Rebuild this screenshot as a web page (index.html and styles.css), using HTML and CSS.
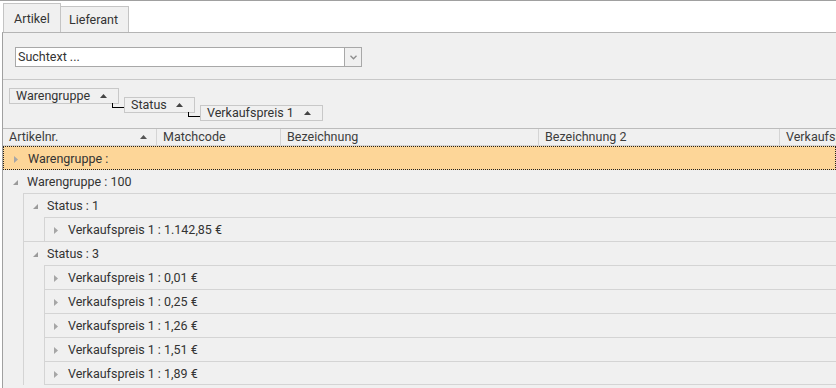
FILE: index.html
```html
<!DOCTYPE html>
<html lang="de">
<head>
    <meta charset="UTF-8">
    <title>Artikel</title>
    <link rel="stylesheet" href="styles.css">
</head>
<body>
<div class="window">
    <!-- Tabs -->
    <div class="tab-strip">
        <div class="tab tab-active">Artikel</div>
        <div class="tab">Lieferant</div>
    </div>

    <div class="panel">
        <!-- Search -->
        <div class="search-bar">
            <div class="combo">
                <span class="combo-text">Suchtext ...</span>
                <span class="combo-btn">
                    <svg width="7" height="5" viewBox="0 0 7 5"><path d="M0.5 0.8L3.5 3.8L6.5 0.8" fill="none" stroke="#8c8c8c" stroke-width="1.3"/></svg>
                </span>
            </div>
        </div>

        <!-- Group by panel -->
        <div class="group-panel">
            <div class="group-box box-warengruppe">Warengruppe <svg class="sort-up" width="7" height="4" viewBox="0 0 7 4"><path d="M0 4L3.5 0L7 4Z"/></svg></div>
            <div class="group-box box-status">Status <svg class="sort-up" width="7" height="4" viewBox="0 0 7 4"><path d="M0 4L3.5 0L7 4Z"/></svg></div>
            <div class="group-box box-preis">Verkaufspreis 1 <svg class="sort-up" width="7" height="4" viewBox="0 0 7 4"><path d="M0 4L3.5 0L7 4Z"/></svg></div>
        </div>

        <!-- Grid -->
        <div class="grid">
            <div class="grid-header">
                <div class="col col-1">Artikelnr. <svg class="sort-up" width="7" height="4" viewBox="0 0 7 4"><path d="M0 4L3.5 0L7 4Z"/></svg></div>
                <div class="col col-2">Matchcode</div>
                <div class="col col-3">Bezeichnung</div>
                <div class="col col-4">Bezeichnung 2</div>
                <div class="col col-5">Verkaufspreis 1</div>
            </div>

            <div class="grid-body">
                <div class="row row-top row-focused">
                    <span class="toggle"><svg width="4" height="7" viewBox="0 0 4 7"><path d="M0 0L4 3.5L0 7Z"/></svg></span>Warengruppe :
                </div>
                <div class="row row-top">
                    <span class="toggle open"><svg width="5" height="5" viewBox="0 0 5 5"><path d="M5 0V5H0Z"/></svg></span>Warengruppe : 100
                </div>
                <div class="children">
                    <div class="row">
                        <span class="toggle open"><svg width="5" height="5" viewBox="0 0 5 5"><path d="M5 0V5H0Z"/></svg></span>Status : 1
                    </div>
                    <div class="children">
                        <div class="row"><span class="toggle"><svg width="4" height="7" viewBox="0 0 4 7"><path d="M0 0L4 3.5L0 7Z"/></svg></span>Verkaufspreis 1 : 1.142,85 €</div>
                    </div>
                    <div class="row">
                        <span class="toggle open"><svg width="5" height="5" viewBox="0 0 5 5"><path d="M5 0V5H0Z"/></svg></span>Status : 3
                    </div>
                    <div class="children">
                        <div class="row"><span class="toggle"><svg width="4" height="7" viewBox="0 0 4 7"><path d="M0 0L4 3.5L0 7Z"/></svg></span>Verkaufspreis 1 : 0,01 €</div>
                        <div class="row"><span class="toggle"><svg width="4" height="7" viewBox="0 0 4 7"><path d="M0 0L4 3.5L0 7Z"/></svg></span>Verkaufspreis 1 : 0,25 €</div>
                        <div class="row"><span class="toggle"><svg width="4" height="7" viewBox="0 0 4 7"><path d="M0 0L4 3.5L0 7Z"/></svg></span>Verkaufspreis 1 : 1,26 €</div>
                        <div class="row"><span class="toggle"><svg width="4" height="7" viewBox="0 0 4 7"><path d="M0 0L4 3.5L0 7Z"/></svg></span>Verkaufspreis 1 : 1,51 €</div>
                        <div class="row row-last"><span class="toggle"><svg width="4" height="7" viewBox="0 0 4 7"><path d="M0 0L4 3.5L0 7Z"/></svg></span>Verkaufspreis 1 : 1,89 €</div>
                    </div>
                </div>
            </div>
        </div>
    </div>
</div>
</body>
</html>
```

FILE: styles.css
```css
/* Base */
body {
    margin: 0;
    font-family: Roboto, "Noto Sans", sans-serif;
    font-size: 12.5px;
    color: #333;
    background-color: #fff;
    overflow: hidden;
}

.window {
    height: 387px;
    border-top: 1px solid #a0a0a0;
    display: flex;
    flex-direction: column;
}

/* Tabs */
.tab-strip {
    display: flex;
    align-items: flex-end;
    flex-shrink: 0;
    height: 31px;
    padding-left: 3px;
}

.tab {
    box-sizing: border-box;
    height: 26px;
    width: 69px;
    padding: 3px 0 0 8px;
    line-height: 20px;
    background-color: #f0f0f0;
    border: 1px solid #c4c4c4;
    border-bottom: none;
    margin-left: -1px;
}

.tab-active {
    height: 29px;
    width: 58px;
    padding: 5px 0 0 10px;
    margin-left: 0;
}

/* Tab page */
.panel {
    flex: 1;
    min-height: 0;
    margin-left: 2px;
    background-color: #f0f0f0;
    border-top: 1px solid #b4b4b4;
    border-left: 1px solid #a0a0a0;
    display: flex;
    flex-direction: column;
}

.search-bar {
    flex-shrink: 0;
    height: 47px;
    box-sizing: border-box;
    padding: 14px 0 0 12px;
    border-bottom: 1px solid #c8c8c8;
}

.combo {
    box-sizing: border-box;
    width: 347px;
    height: 20px;
    display: flex;
    background-color: #fff;
    border: 1px solid #a8a8a8;
}

.combo-text {
    flex: 1;
    padding-left: 2px;
    line-height: 18px;
}

.combo-btn {
    width: 16px;
    border-left: 1px solid #a8a8a8;
    background-color: #f0f0f0;
    display: flex;
    align-items: center;
    justify-content: center;
}

/* Group by panel */
.group-panel {
    flex-shrink: 0;
    height: 48px;
    box-sizing: border-box;
    padding: 8px 0 0 6px;
    display: flex;
    align-items: flex-start;
    gap: 5px;
}

.group-box {
    position: relative;
    box-sizing: border-box;
    height: 16px;
    padding: 0 11px 0 6px;
    border: 1px solid #c8c8c8;
    display: flex;
    align-items: center;
    justify-content: space-between;
    line-height: 14px;
}

.box-warengruppe {
    width: 110px;
}

.box-status {
    width: 71px;
    margin-top: 9px;
}

.box-preis {
    width: 123px;
    margin-top: 17px;
}

/* connector line to the next grouping level */
.group-box:not(:last-child)::after {
    content: "";
    position: absolute;
    top: 100%;
    right: -6px;
    box-sizing: border-box;
    width: 12px;
    height: 5px;
    border-left: 1px solid #000;
    border-bottom: 1px solid #000;
}

.sort-up {
    fill: #444;
    flex-shrink: 0;
}

/* Grid */
.grid {
    flex: 1;
    min-height: 0;
    border-top: 1px solid #bcbcbc;
    overflow: hidden;
}

.grid-header {
    display: flex;
    height: 17px;
    box-sizing: border-box;
    border-bottom: 1px solid #d4d4d4;
    color: #3c3c3c;
}

.col {
    flex-shrink: 0;
    box-sizing: border-box;
    padding-left: 6px;
    line-height: 16px;
    border-right: 1px solid #d4d4d4;
    white-space: nowrap;
}

.col-1 {
    width: 154px;
    display: flex;
    align-items: center;
    justify-content: space-between;
    padding-right: 9px;
}

.col-1 .sort-up {
    fill: #555;
}

.col-2 { width: 124px; }
.col-3 { width: 258px; }
.col-4 { width: 241px; }
.col-5 { width: 120px; border-right: none; }

/* Group rows */
.row {
    height: 24px;
    box-sizing: border-box;
    border-top: 1px solid #d4d4d4;
    display: flex;
    align-items: center;
    white-space: nowrap;
}

.row-top {
    height: 23px;
    border-top: none;
    padding-left: 1px;
}

.row-focused {
    height: 24px;
    background-color: #fdd698;
    border: 1px dotted #222;
}

.row-last {
    border-bottom: 1px solid #d4d4d4;
}

.children {
    margin-left: 20px;
    border-left: 1px solid #d4d4d4;
}

.toggle {
    width: 14px;
    margin-left: 9px;
    display: flex;
    align-items: center;
    padding-top: 2px;
    fill: #a6a6a6;
}

.toggle.open {
    padding-top: 1px;
    fill: #9a9a9a;
}
```
